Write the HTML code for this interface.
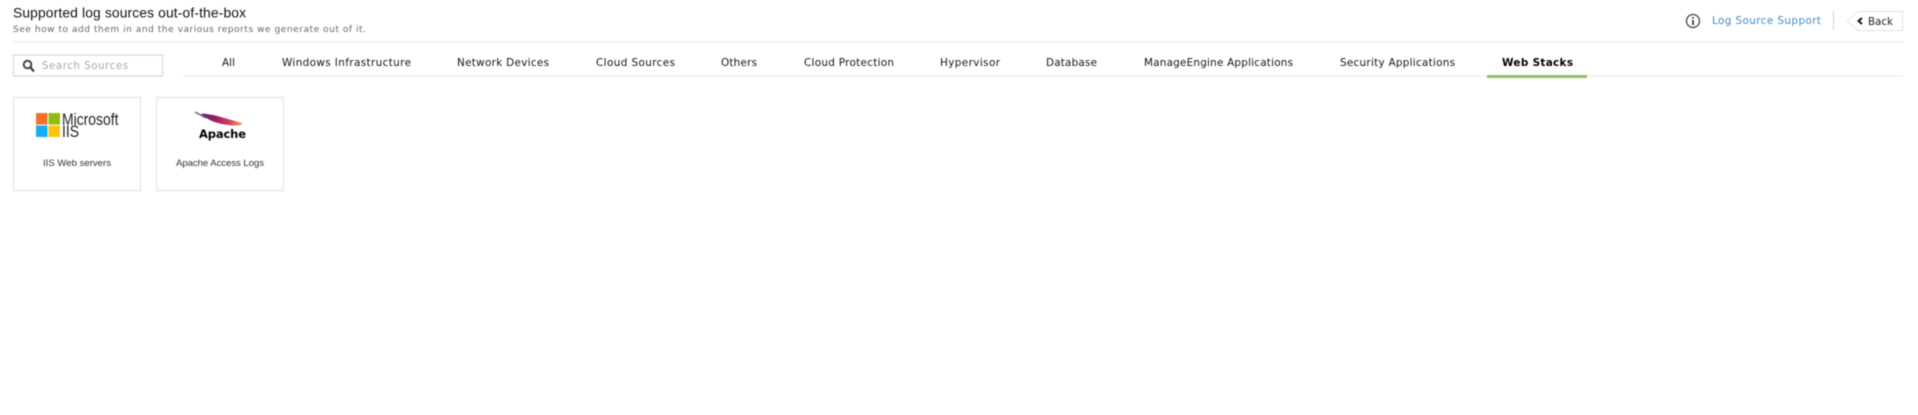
<!DOCTYPE html>
<html><head><meta charset="utf-8"><style>
html,body{margin:0;padding:0;background:#fff;width:1918px;height:415px;overflow:hidden}
svg{display:block;filter:blur(.4px)}
text{font-family:"DejaVu Sans",sans-serif;font-size:10.4px;fill:#151515}
.l{font-family:"Liberation Sans",sans-serif}
</style></head><body>
<svg width="1918" height="415" viewBox="0 0 1918 415">
<defs><linearGradient id="f" x1="0" x2="1" y1="0" y2="0"><stop offset="0" stop-color="#5a2a7a"/><stop offset=".35" stop-color="#a01c5e"/><stop offset=".7" stop-color="#d6455f"/><stop offset="1" stop-color="#efb56a"/></linearGradient></defs>
<rect width="1918" height="415" fill="#fff"/>
<text class="l" x="13" y="17.5" style="font-size:13.8px;fill:#111" textLength="233">Supported log sources out-of-the-box</text>
<text x="13" y="32" style="font-size:9px;fill:#666" textLength="353">See how to add them in and the various reports we generate out of it.</text>
<rect x="13" y="41" width="1890" height="2" fill="#f1f1f1"/>
<rect x="13.5" y="55" width="149" height="21" fill="#fff" stroke="#dcdcdc" stroke-width="1.4"/>
<circle cx="27.5" cy="64.5" r="3.8" fill="none" stroke="#444" stroke-width="2"/>
<path d="M30.5 67.5L34 71.5" stroke="#444" stroke-width="2.4"/>
<text x="42" y="69" style="fill:#a8a8a8;font-size:10.2px" textLength="86">Search Sources</text>
<rect x="183" y="75" width="1720" height="2" fill="#f3f3f3"/>
<text x="222" y="66" textLength="13">All</text>
<text x="282" y="66" textLength="129">Windows Infrastructure</text>
<text x="457" y="66" textLength="92">Network Devices</text>
<text x="596" y="66" textLength="79">Cloud Sources</text>
<text x="721" y="66" textLength="36">Others</text>
<text x="804" y="66" textLength="90">Cloud Protection</text>
<text x="940" y="66" textLength="60">Hypervisor</text>
<text x="1046" y="66" textLength="51">Database</text>
<text x="1144" y="66" textLength="149">ManageEngine Applications</text>
<text x="1340" y="66" textLength="115">Security Applications</text>
<text x="1502" y="66" textLength="71" style="font-weight:bold;fill:#000">Web Stacks</text>
<rect x="1487" y="75" width="100" height="3" fill="#8cc163"/>
<circle cx="1693" cy="21" r="6.5" fill="#fff" stroke="#444" stroke-width="1.3"/>
<rect x="1692.2" y="20" width="1.6" height="5" fill="#222"/><rect x="1692.2" y="17" width="1.6" height="1.6" fill="#222"/>
<text x="1712" y="24" style="fill:#3f8ccb" textLength="109">Log Source Support</text>
<rect x="1833" y="11" width="1" height="19" fill="#d0d0d0"/>
<path d="M1902.5 11.5H1858L1847 21L1858 30.5H1902.5Z" fill="#fff" stroke="#e2e2e2"/>
<path d="M1862 18L1858.5 21L1862 24" fill="none" stroke="#111" stroke-width="2"/>
<text x="1868" y="25" style="fill:#222" textLength="25">Back</text>
<rect x="13.5" y="97.5" width="127" height="93" fill="#fff" stroke="#e4e4e4" stroke-width="1.2"/>
<rect x="156.5" y="97.5" width="127" height="93" fill="#fff" stroke="#e4e4e4" stroke-width="1.2"/>
<rect x="36" y="113" width="11.5" height="11.5" fill="#f36f2d"/>
<rect x="48.5" y="113" width="11.5" height="11.5" fill="#8fbd0c"/>
<rect x="36" y="125.5" width="11.5" height="11.5" fill="#11aef0"/>
<rect x="48.5" y="125.5" width="11.5" height="11.5" fill="#fdc30b"/>
<text class="l" transform="translate(62,125) scale(.82,1)" style="font-size:17px;fill:#222">Microsoft</text>
<text class="l" transform="translate(62,137) scale(.82,1)" style="font-size:17px;fill:#222">IIS</text>
<text class="l" x="43" y="166" style="font-size:9.6px;fill:#333" textLength="68">IIS Web servers</text>
<path d="M201 113.5C215 114 226 119 243 123L240 125.5C225 126 208 122 201 113.5Z" fill="url(#f)"/>
<path d="M195 112L206 118" stroke="#666" stroke-width="1.5"/>
<text x="199" y="138" style="font-size:11.5px;font-weight:bold;fill:#000" textLength="47">Apache</text>
<text class="l" x="176" y="166" style="font-size:9.6px;fill:#333" textLength="88">Apache Access Logs</text>
</svg>
</body></html>
